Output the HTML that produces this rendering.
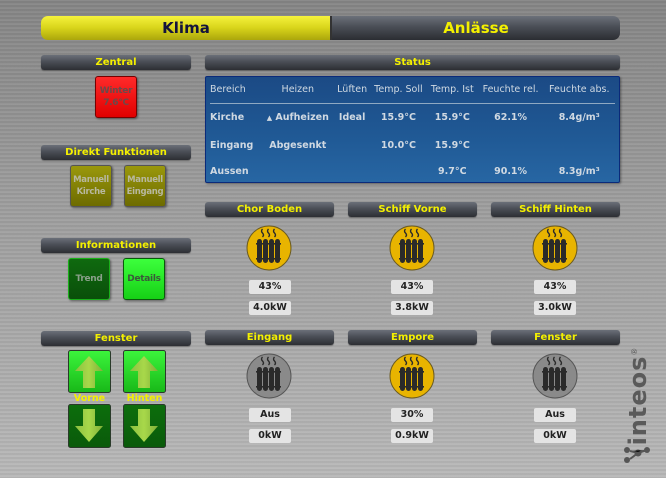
<!DOCTYPE html>
<html><head><meta charset="utf-8"><style>
*{margin:0;padding:0;box-sizing:border-box}
body{width:666px;height:478px;overflow:hidden;position:relative;font-family:"DejaVu Sans","Liberation Sans",sans-serif;font-weight:bold;
background:repeating-linear-gradient(180deg,rgba(255,255,255,.05) 0 1px,rgba(0,0,0,.04) 1px 3px,rgba(255,255,255,.03) 3px 4px),linear-gradient(180deg,#858585 0%,#9c9c9c 40%,#acacac 75%,#b8b8b8 100%)}
.a{position:absolute}
.hd{position:absolute;height:15px;border-radius:3px;background:linear-gradient(180deg,#6b7079 0%,#4a4e56 45%,#2c2e33 100%);color:#f4f000;font-size:10px;text-align:center;line-height:15px;box-shadow:0 1px 1px rgba(0,0,0,.3)}
.btn{position:absolute;width:42px;height:42px;border-radius:3px;font-size:9px;text-align:center;display:flex;align-items:center;justify-content:center;line-height:12px;box-shadow:1px 1px 2px rgba(0,0,0,.45);letter-spacing:-0.3px}
.val{position:absolute;width:42px;height:14px;background:#e4e4e4;border-radius:2px;font-size:9.5px;color:#222;text-align:center;line-height:14px}
table{border-collapse:collapse;width:100%;font-size:9.5px;color:#d0d9e2}
td{height:26px;text-align:center;white-space:nowrap}
</style></head><body>
<div class="a" style="left:41px;top:16px;width:290px;height:24px;border-radius:7px 0 0 7px;background:linear-gradient(180deg,#f5f23c 0%,#d8d41a 50%,#aba60c 100%);color:#14143c;font-size:15px;text-align:center;line-height:24px">Klima</div>
<div class="a" style="left:330px;top:16px;width:290px;height:24px;border-radius:0 7px 7px 0;border-left:2px solid #333;background:linear-gradient(180deg,#6c717a 0%,#4a4e56 45%,#2b2d32 100%);color:#f4f000;font-size:15px;text-align:center;line-height:24px">Anlässe</div>

<div class="hd" style="left:41px;top:55px;width:150px">Zentral</div>
<div class="btn" style="left:95px;top:76px;background:linear-gradient(180deg,#ff2a2a,#e00000);color:#6a4a4a;border:1px solid #700">Winter<br>7.6°C</div>

<div class="hd" style="left:41px;top:145px;width:150px">Direkt Funktionen</div>
<div class="btn" style="left:70px;top:165px;background:linear-gradient(180deg,#9a980c,#6d6b00);color:#b8b8a0;border:1px solid #555;font-size:8.5px">Manuell<br>Kirche</div>
<div class="btn" style="left:124px;top:165px;background:linear-gradient(180deg,#9a980c,#6d6b00);color:#b8b8a0;border:1px solid #555;font-size:8.5px">Manuell<br>Eingang</div>

<div class="hd" style="left:41px;top:238px;width:150px">Informationen</div>
<div class="btn" style="left:68px;top:258px;background:linear-gradient(180deg,#0f6a0f,#0a4f0a);color:#8aa08a;border:1px solid #1ab01a">Trend</div>
<div class="btn" style="left:123px;top:258px;background:linear-gradient(180deg,#3cff3c,#16d016);color:#3a5a3a;border:1px solid #0a5a0a">Details</div>

<div class="hd" style="left:41px;top:331px;width:150px">Fenster</div>
<svg class="a" style="left:68px;top:350px" width="100" height="100" viewBox="0 0 100 100">
<defs><linearGradient id="gu" x1="0" y1="0" x2="0" y2="1"><stop offset="0" stop-color="#3cf53c"/><stop offset="1" stop-color="#18b818"/></linearGradient>
<linearGradient id="gd" x1="0" y1="0" x2="0" y2="1"><stop offset="0" stop-color="#0d6e0d"/><stop offset="1" stop-color="#0a5a0a"/></linearGradient>
<linearGradient id="ga" x1="0" y1="0" x2="1" y2="0"><stop offset="0" stop-color="#8cc040"/><stop offset=".5" stop-color="#a8d84a"/><stop offset="1" stop-color="#80b038"/></linearGradient></defs>
<g id="up"><rect x="0.5" y="0.5" width="42" height="42" rx="2" fill="url(#gu)" stroke="#2a3a2a"/>
<path d="M21 6 L35 21 L27 21 L27 38 L15 38 L15 21 L7 21 Z" fill="url(#ga)"/></g>
<use href="#up" x="55"/>
<g id="dn"><rect x="0.5" y="54.5" width="42" height="43" rx="2" fill="url(#gd)" stroke="#2a3a2a"/>
<path d="M15 59 L27 59 L27 76 L35 76 L21 92 L7 76 L15 76 Z" fill="url(#ga)"/></g>
<use href="#dn" x="55"/>
</svg>
<div class="a" style="left:68px;top:393px;width:43px;text-align:center;color:#f4f000;font-size:9.5px">Vorne</div>
<div class="a" style="left:123px;top:393px;width:43px;text-align:center;color:#f4f000;font-size:9.5px">Hinten</div>

<div class="hd" style="left:205px;top:55px;width:415px">Status</div>
<div class="a" style="left:205px;top:76px;width:415px;height:107px;border:1px solid #0a2a7a;border-radius:2px;background:linear-gradient(180deg,#1b4a85 0%,#205a96 60%,#2766a3 100%);box-shadow:1px 1px 2px rgba(0,0,0,.4);padding:0 4px">
<table>
<tr style="border-bottom:1px solid #8fa8c2"><td style="text-align:left;font-weight:normal;height:25px">Bereich</td><td style="font-weight:normal">Heizen</td><td style="font-weight:normal">Lüften</td><td style="font-weight:normal">Temp. Soll</td><td style="font-weight:normal">Temp. Ist</td><td style="font-weight:normal">Feuchte rel.</td><td style="font-weight:normal">Feuchte abs.</td></tr>
<tr><td style="text-align:left;height:29px">Kirche</td><td><span style="font-size:7px">▲</span> Aufheizen</td><td>Ideal</td><td>15.9°C</td><td>15.9°C</td><td>62.1%</td><td>8.4g/m³</td></tr>
<tr><td style="text-align:left">Eingang</td><td>Abgesenkt</td><td></td><td>10.0°C</td><td>15.9°C</td><td></td><td></td></tr>
<tr><td style="text-align:left;height:24px">Aussen</td><td></td><td></td><td></td><td>9.7°C</td><td>90.1%</td><td>8.3g/m³</td></tr>
</table></div>

<svg width="0" height="0" style="position:absolute"><defs>
<g id="rad"><path d="M-6.5 -19 q-2 2 0 4 q2 2 0 4 M-0.5 -19 q-2 2 0 4 q2 2 0 4 M5.5 -19 q-2 2 0 4 q2 2 0 4" stroke="#2a2a2a" stroke-width="1.4" fill="none"/>
<rect x="-12" y="-9" width="5" height="24" rx="2.5" fill="#2a2a2a"/><rect x="-6" y="-9" width="5" height="24" rx="2.5" fill="#2a2a2a"/><rect x="0" y="-9" width="5" height="24" rx="2.5" fill="#2a2a2a"/><rect x="6" y="-9" width="5" height="24" rx="2.5" fill="#2a2a2a"/>
<rect x="-13" y="-5" width="25" height="1.6" fill="#2a2a2a"/><rect x="-13" y="10" width="25" height="1.6" fill="#2a2a2a"/></g>
</defs></svg>

<div class="hd" style="left:205px;top:202px;width:129px">Chor Boden</div>
<div class="hd" style="left:348px;top:202px;width:129px">Schiff Vorne</div>
<div class="hd" style="left:491px;top:202px;width:129px">Schiff Hinten</div>
<div class="hd" style="left:205px;top:330px;width:129px">Eingang</div>
<div class="hd" style="left:348px;top:330px;width:129px">Empore</div>
<div class="hd" style="left:491px;top:330px;width:129px">Fenster</div>

<svg class="a" style="left:0;top:0" width="666" height="478">
<g transform="translate(269,248)"><circle r="22" fill="#e8b400" stroke="#6a5a20" stroke-width="1"/><use href="#rad"/></g>
<g transform="translate(412,248)"><circle r="22" fill="#e8b400" stroke="#6a5a20" stroke-width="1"/><use href="#rad"/></g>
<g transform="translate(555,248)"><circle r="22" fill="#e8b400" stroke="#6a5a20" stroke-width="1"/><use href="#rad"/></g>
<g transform="translate(269,376)"><circle r="22" fill="#8a8a8a" stroke="#555" stroke-width="1"/><use href="#rad"/></g>
<g transform="translate(412,376)"><circle r="22" fill="#e8b400" stroke="#6a5a20" stroke-width="1"/><use href="#rad"/></g>
<g transform="translate(555,376)"><circle r="22" fill="#8a8a8a" stroke="#555" stroke-width="1"/><use href="#rad"/></g>
<circle cx="627" cy="450" r="3" fill="#555"/><circle cx="638" cy="453" r="3.5" fill="#555"/><circle cx="627" cy="460" r="3" fill="#555"/><circle cx="647" cy="450" r="3" fill="#555"/>
<path d="M630 451 L638 453 L647 450 M630 459 L638 453" stroke="#555" stroke-width="2"/>
</svg>

<div class="val" style="left:249px;top:280px">43%</div><div class="val" style="left:249px;top:301px">4.0kW</div>
<div class="val" style="left:391px;top:280px">43%</div><div class="val" style="left:391px;top:301px">3.8kW</div>
<div class="val" style="left:534px;top:280px">43%</div><div class="val" style="left:534px;top:301px">3.0kW</div>
<div class="val" style="left:249px;top:408px">Aus</div><div class="val" style="left:249px;top:429px">0kW</div>
<div class="val" style="left:391px;top:408px">30%</div><div class="val" style="left:391px;top:429px">0.9kW</div>
<div class="val" style="left:534px;top:408px">Aus</div><div class="val" style="left:534px;top:429px">0kW</div>

<div class="a" style="left:638px;top:396px;transform:translate(-50%,-50%) rotate(-90deg);font-size:24px;color:#5a5a5a;font-family:'DejaVu Sans',sans-serif;font-weight:bold;white-space:nowrap;letter-spacing:1px">inteos<sup style="font-size:8px;font-weight:normal">®</sup></div>
</body></html>
